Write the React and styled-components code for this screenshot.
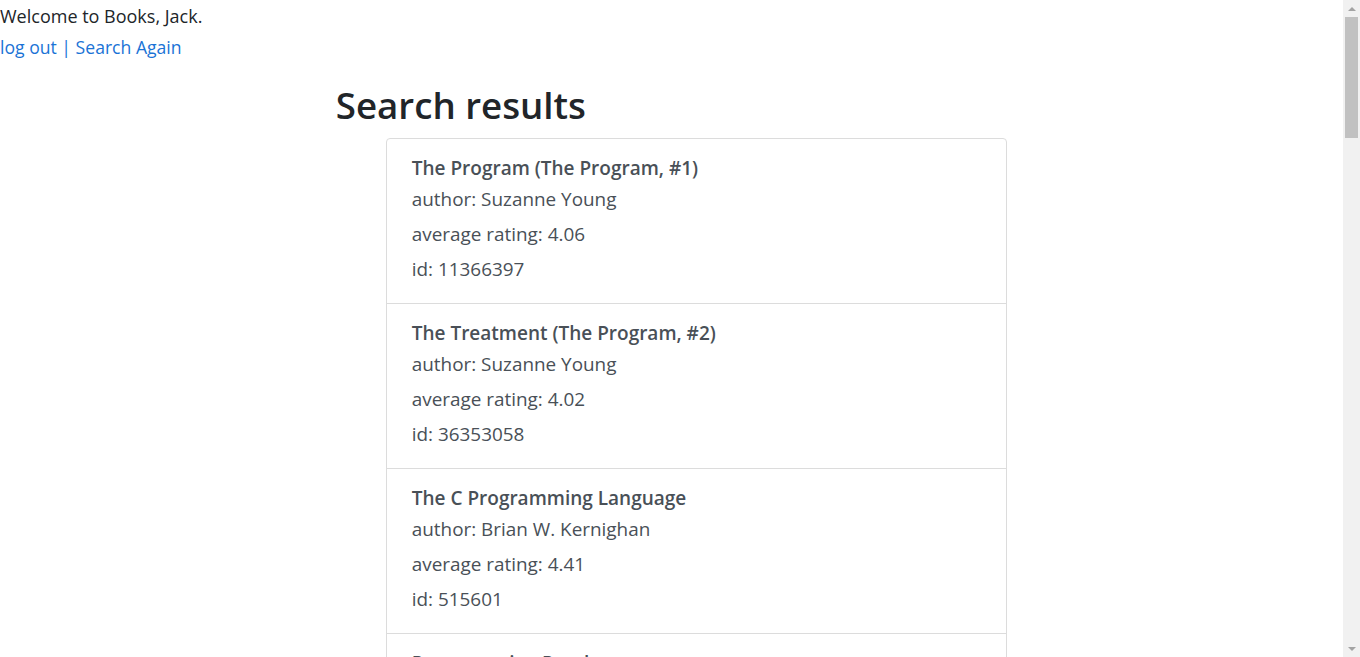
import React from "react";
import styled, { createGlobalStyle } from "styled-components";

const Global = createGlobalStyle`
  html, body { margin: 0; padding: 0; background: #fff; }
  body {
    margin-right: 17px;
    font-family: "Open Sans", "Noto Sans", sans-serif;
    font-size: 16px;
    color: #212529;
  }
`;

const Header = styled.header`
  padding-top: 3px;
`;

const Welcome = styled.div`
  font-size: 18px;
  line-height: 26px;
`;

const Links = styled.div`
  font-size: 17.6px;
  line-height: 36px;
  color: #1a73d6;
`;

const Link = styled.a`
  color: #1a73d6;
  text-decoration: none;
`;

const Main = styled.main`
  margin-left: 25%;
  width: 50%;
`;

const Title = styled.h1`
  margin: 17px 0 10px;
  font-size: 36.7px;
  font-weight: 600;
  line-height: 46px;
  color: #212529;
`;

const List = styled.ul`
  list-style: none;
  margin: 0 0 16px 50px;
  padding: 0;
  border: 1px solid #dcdcdc;
  border-radius: 4px;
`;

const Item = styled.li`
  padding: 15px 25px 16px;
  border-top: 1px solid #dcdcdc;
  color: #495057;
  &:first-child { border-top: none; }
`;

const BookTitle = styled.div`
  font-size: 19px;
  font-weight: 600;
  line-height: 28px;
`;

const Field = styled.div`
  font-size: 18.9px;
  line-height: 35px;
`;

const Scrollbar = styled.div`
  position: fixed;
  top: 0;
  right: 0;
  width: 17px;
  height: 100vh;
  background: #f1f1f1;
  display: flex;
  flex-direction: column;
  align-items: center;
`;

const Arrow = styled.div`
  height: 17px;
  width: 17px;
  display: flex;
  align-items: center;
  justify-content: center;
  flex: none;
  &::before {
    content: "";
    width: 0;
    height: 0;
    border-left: 4px solid transparent;
    border-right: 4px solid transparent;
    ${(p) => (p.$down ? "border-top: 4px solid #a3a3a3;" : "border-bottom: 4px solid #a3a3a3;")}
  }
`;

const Track = styled.div`
  flex: 1;
  width: 100%;
  display: flex;
  justify-content: center;
`;

const Thumb = styled.div`
  width: 13px;
  height: 121px;
  background: #c1c1c1;
`;

const books = [
  { title: "The Program (The Program, #1)", author: "Suzanne Young", rating: "4.06", id: "11366397" },
  { title: "The Treatment (The Program, #2)", author: "Suzanne Young", rating: "4.02", id: "36353058" },
  { title: "The C Programming Language", author: "Brian W. Kernighan", rating: "4.41", id: "515601" },
  { title: "Programming Pearls", author: "Jon Bentley", rating: "4.23", id: "52084" },
  { title: "Programming Perl", author: "Tom Christiansen", rating: "4.19", id: "69861" },
  { title: "Programming Ruby: The Pragmatic Programmers' Guide", author: "Dave Thomas", rating: "4.07", id: "3131" },
  { title: "The Pragmatic Programmer: From Journeyman to Master", author: "Andrew Hunt", rating: "4.33", id: "4099" },
  { title: "Programming in Scala", author: "Martin Odersky", rating: "4.14", id: "5680904" },
  { title: "Elements of Programming Interviews", author: "Adnan Aziz", rating: "4.36", id: "13360220" },
  { title: "The Art of Computer Programming, Volume 1", author: "Donald Ervin Knuth", rating: "4.36", id: "112245" },
  { title: "Programming Python", author: "Mark Lutz", rating: "3.94", id: "80435" },
  { title: "Programming Erlang", author: "Joe Armstrong", rating: "4.11", id: "808814" },
  { title: "Programming Collective Intelligence", author: "Toby Segaran", rating: "4.04", id: "1741472" },
  { title: "The Practice of Programming", author: "Brian W. Kernighan", rating: "4.16", id: "52082" },
  { title: "Programming Clojure", author: "Stuart Halloway", rating: "3.95", id: "6049848" },
  { title: "Programming Windows", author: "Charles Petzold", rating: "4.17", id: "44895" },
  { title: "Programming in Lua", author: "Roberto Ierusalimschy", rating: "4.22", id: "1231049" },
  { title: "Programming Rust", author: "Jim Blandy", rating: "4.27", id: "25550614" },
  { title: "Expert C Programming: Deep C Secrets", author: "Peter van der Linden", rating: "4.30", id: "198207" },
  { title: "Programming Elixir", author: "Dave Thomas", rating: "4.15", id: "17971505" },
];

export default function App() {
  return (
    <>
      <Global />
      <Header>
        <Welcome>Welcome to Books, Jack.</Welcome>
        <Links>
          <Link href="#">log out</Link> | <Link href="#">Search Again</Link>
        </Links>
      </Header>
      <Main>
        <Title>Search results</Title>
        <List>
          {books.map((b, i) => (
            <Item key={i}>
              <BookTitle>{b.title}</BookTitle>
              <Field>author: {b.author}</Field>
              <Field>average rating: {b.rating}</Field>
              <Field>id: {b.id}</Field>
            </Item>
          ))}
        </List>
      </Main>
      <Scrollbar>
        <Arrow />
        <Track>
          <Thumb />
        </Track>
        <Arrow $down />
      </Scrollbar>
    </>
  );
}
